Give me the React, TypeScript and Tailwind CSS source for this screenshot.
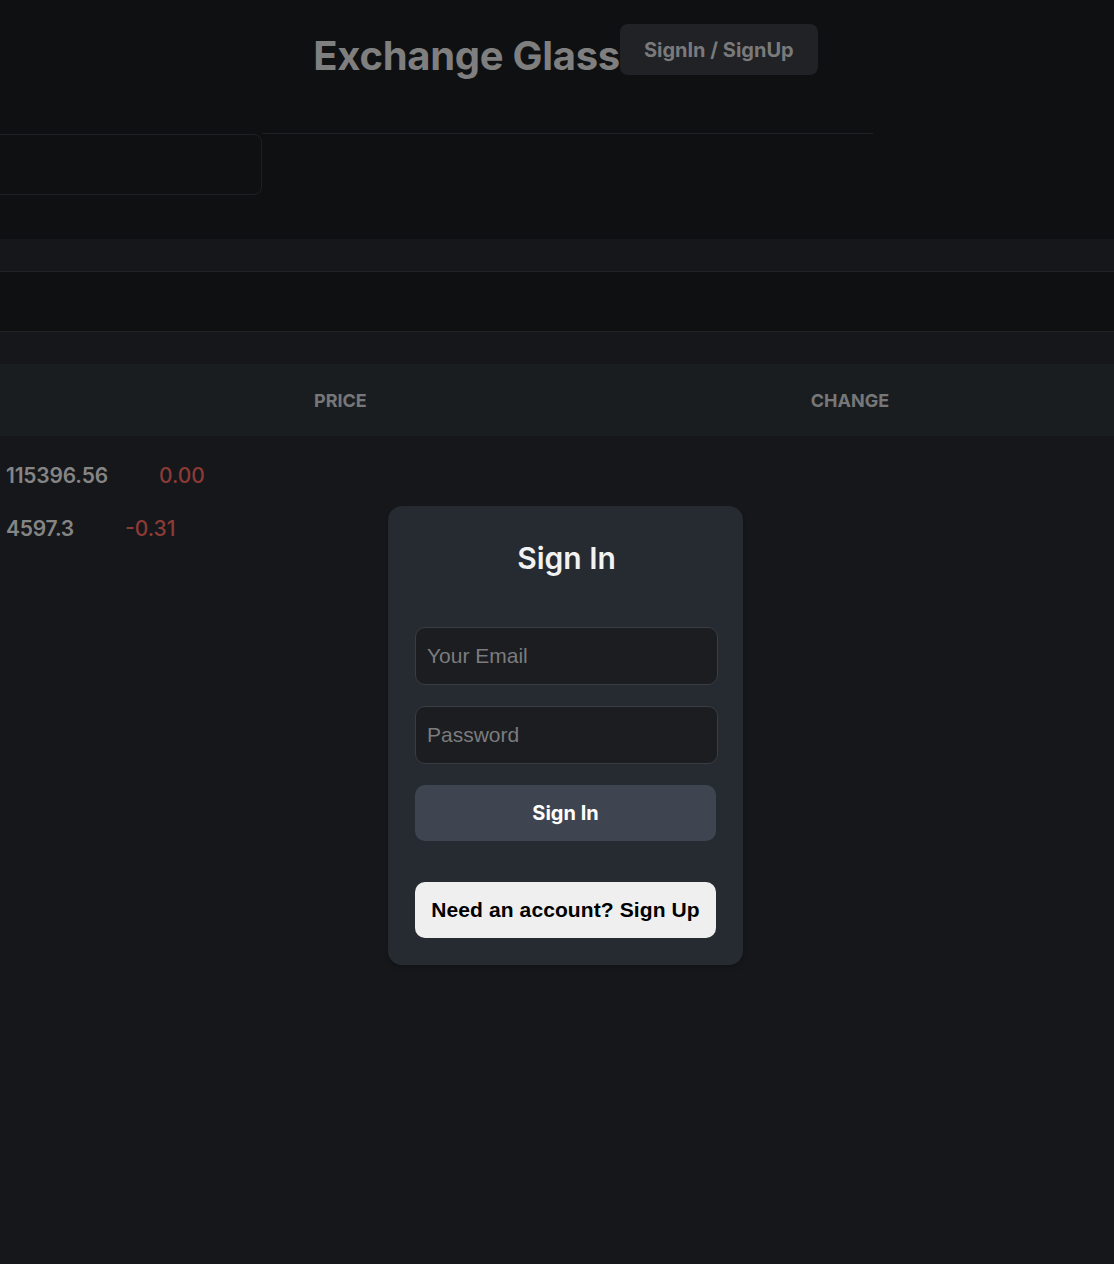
import { useState } from 'react';

const rows = [
  { price: '115396.56', change: '0.00' },
  { price: '4597.3', change: '-0.31' },
];

const SignInModal = () => {
  const [email, setEmail] = useState('');
  const [password, setPassword] = useState('');

  return (
    <div className="absolute inset-0 z-10">
      <div className="absolute left-[388px] top-[506px] w-[355px] rounded-[14px] bg-[#262a31] pl-[27px] pr-[25px] pt-[28px] pb-[27px] shadow-md">
        <h2 className="text-center text-[30px] leading-[48px] font-semibold text-[#f2f2f2] font-['Inter',sans-serif]">Sign In</h2>
        <form className="mt-[45px] flex flex-col" onSubmit={(e) => e.preventDefault()}>
          <input
            type="email"
            value={email}
            onChange={(e) => setEmail(e.target.value)}
            placeholder="Your Email"
            className="h-[58px] w-[303px] rounded-[10px] border border-[#3a3d43] bg-[#1b1d21] px-[11px] text-[21px] text-white placeholder:text-[#7b7c7e] outline-none font-['Liberation_Sans',Arial,sans-serif]"
          />
          <input
            type="password"
            value={password}
            onChange={(e) => setPassword(e.target.value)}
            placeholder="Password"
            className="mt-[21px] h-[58px] w-[303px] rounded-[10px] border border-[#3a3d43] bg-[#1b1d21] px-[11px] text-[21px] text-white placeholder:text-[#7b7c7e] outline-none font-['Liberation_Sans',Arial,sans-serif]"
          />
          <button
            type="submit"
            className="mt-[21px] h-[56px] w-[301px] rounded-[10px] bg-[#3f4550] text-[20px] font-bold text-white font-['Inter',sans-serif]"
          >
            Sign In
          </button>
        </form>
        <button className="mt-[41px] h-[56px] w-[301px] rounded-[10px] bg-[#efefef] text-[21px] font-bold tracking-[0.1px] text-black font-['Liberation_Sans',Arial,sans-serif]">
          Need an account? Sign Up
        </button>
      </div>
    </div>
  );
};

export default function App() {
  return (
    <div className="relative min-h-[1264px] w-full overflow-hidden bg-[#15171a] font-['Inter',sans-serif]">
      {/* top / header area */}
      <div className="h-[239px] bg-[#0f1012]">
        <div className="flex items-start justify-center pl-[17px] pt-[24px]">
          <h1 className="mt-[8px] text-[40px] leading-[48px] font-bold tracking-[-0.3px] text-[#7f7f7f]">Exchange Glass</h1>
          <button className="h-[51px] rounded-[8px] bg-[#202226] px-[24px] text-[20px] font-bold text-[#7a7a7b]">
            SignIn / SignUp
          </button>
        </div>
        <div className="mt-[53px] flex items-start">
          <div className="ml-[-40px] mt-[1px] h-[61px] w-[302px] rounded-[8px] border border-[#1e2023]" />
          <div className="h-px w-[611px] bg-[#1f2124]" />
        </div>
      </div>

      {/* tab strips */}
      <div className="h-[33px] border-b border-[#202225] bg-[#16171a]" />
      <div className="h-[60px] border-b border-[#202225] bg-[#0f1012]" />
      <div className="h-[32px] bg-[#16171a]" />

      {/* table header */}
      <div className="flex h-[72px] items-center bg-[#1a1d1f] text-[18px] font-bold uppercase text-[#767779]">
        <span className="ml-[314px]">Price</span>
        <span className="ml-[444px]">Change</span>
      </div>

      {/* rows */}
      <div className="flex flex-col pt-[13px]">
        {rows.map((r) => (
          <div key={r.price} className="flex h-[53px] items-center text-[21px] font-semibold">
            <span className="ml-[6px] tracking-[-0.2px] text-[#858585]">{r.price}</span>
            <span className="ml-[51px] font-medium text-[#8c3a36]">{r.change}</span>
          </div>
        ))}
      </div>

      <SignInModal />
    </div>
  );
}
